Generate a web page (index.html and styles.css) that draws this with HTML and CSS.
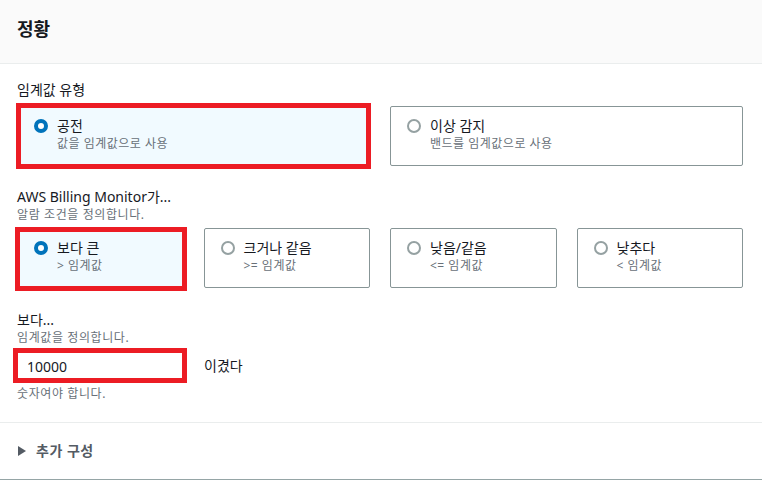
FILE: index.html
```html
<!DOCTYPE html>
<html lang="ko">
<head>
<meta charset="utf-8">
<link rel="stylesheet" href="styles.css">
</head>
<body>
<div class="panel">
  <div class="header"><h2 class="title">정황</h2></div>
  <div class="content">
    <div class="field field-type">
      <div class="label">임계값 유형</div>
      <div class="tiles two">
        <div class="tile selected mark mark-a">
          <span class="radio on"></span>
          <div class="tile-text">
            <div class="tile-title">공전</div>
            <div class="tile-sub">값을 임계값으로 사용</div>
          </div>
        </div>
        <div class="tile">
          <span class="radio"></span>
          <div class="tile-text">
            <div class="tile-title">이상 감지</div>
            <div class="tile-sub">밴드를 임계값으로 사용</div>
          </div>
        </div>
      </div>
    </div>

    <div class="field field-cond">
      <div class="label">AWS Billing Monitor가...</div>
      <div class="desc">알람 조건을 정의합니다.</div>
      <div class="tiles four">
        <div class="tile selected mark mark-b">
          <span class="radio on"></span>
          <div class="tile-text">
            <div class="tile-title">보다 큰</div>
            <div class="tile-sub">&gt; 임계값</div>
          </div>
        </div>
        <div class="tile">
          <span class="radio"></span>
          <div class="tile-text">
            <div class="tile-title">크거나 같음</div>
            <div class="tile-sub">&gt;= 임계값</div>
          </div>
        </div>
        <div class="tile">
          <span class="radio"></span>
          <div class="tile-text">
            <div class="tile-title">낮음/같음</div>
            <div class="tile-sub">&lt;= 임계값</div>
          </div>
        </div>
        <div class="tile">
          <span class="radio"></span>
          <div class="tile-text">
            <div class="tile-title">낮추다</div>
            <div class="tile-sub">&lt; 임계값</div>
          </div>
        </div>
      </div>
    </div>

    <div class="field field-value">
      <div class="label">보다...</div>
      <div class="desc">임계값을 정의합니다.</div>
      <div class="input-row">
        <div class="input-wrap mark mark-c"><input class="input" type="text" value="10000"></div>
        <span class="suffix">이겼다</span>
      </div>
      <div class="desc hint">숫자여야 합니다.</div>
    </div>
  </div>
  <div class="expand">
    <span class="caret"></span>
    <span class="expand-label">추가 구성</span>
  </div>
</div>
</body>
</html>
```

FILE: styles.css
```css
* { box-sizing: border-box; }
html, body { margin: 0; padding: 0; background: #ffffff; }
body {
  font-family: "Noto Sans", "Noto Sans CJK KR", sans-serif;
  color: #16191f;
  font-size: 14px;
  line-height: 20px;
}
.panel {
  width: 762px;
  height: 480px;
  border-bottom: 1px solid #95a5a6;
  overflow: hidden;
}
.header {
  height: 64px;
  background: #fafafa;
  border-bottom: 1px solid #eaeded;
  padding: 18px 17px 0;
}
.title {
  margin: 0;
  font-size: 18px;
  line-height: 22px;
  font-weight: 700;
}
.content {
  padding: 0 19px 0 17px;
  border-bottom: 1px solid #eaeded;
}
.field-type { padding-top: 16px; }
.field-cond { padding-top: 21px; }
.field-value { padding-top: 22px; padding-bottom: 20px; }
.label { font-size: 14px; line-height: 20px; color: #16191f; }
.desc { font-size: 12px; line-height: 16px; color: #687078; letter-spacing: 0.6px; }
.tiles { display: grid; column-gap: 20px; }
.tiles.two { grid-template-columns: 1fr 1fr; margin-top: 6px; }
.tiles.four { grid-template-columns: repeat(4, 1fr); margin-top: 5px; }
.tile {
  position: relative;
  display: flex;
  align-items: flex-start;
  height: 60px;
  padding: 9px 16px 0;
  border: 1px solid #879596;
  border-radius: 2px;
  background: #ffffff;
}
.tile.selected { background: #f1faff; border-color: #00a1c9; }
.radio {
  flex: none;
  width: 14px;
  height: 14px;
  margin-top: 3px;
  margin-right: 9px;
  border: 2px solid #95a1a2;
  border-radius: 50%;
  background: #fff;
}
.radio.on { border: 4px solid #0073bb; }
.tile-title { font-size: 14px; line-height: 20px; color: #16191f; }
.tile-sub { font-size: 12px; line-height: 16px; color: #687078; letter-spacing: 0.5px; }
.mark::after {
  content: "";
  position: absolute;
  border: 5px solid #ec1c24;
  pointer-events: none;
}
.mark-a::after { top: -4px; bottom: -4px; left: -2px; right: -2px; }
.mark-b::after { top: -2px; bottom: -4px; left: -3px; right: -4px; }
.mark-c::after { top: -2px; bottom: -1px; left: -4px; right: -4px; }
.input-row {
  display: flex;
  align-items: center;
  margin-top: 4px;
}
.input-wrap { position: relative; width: 166px; flex: none; }
.input {
  display: block;
  width: 100%;
  height: 32px;
  padding: 0 9px;
  border: 1px solid #aab7b8;
  border-radius: 2px;
  font-family: "Noto Sans", "Noto Sans CJK KR", sans-serif;
  font-size: 14px;
  color: #16191f;
  background: #fff;
  outline: none;
}
.suffix { margin-left: 21px; font-size: 14px; line-height: 20px; }
.hint { margin-top: 4px; }
.expand {
  display: flex;
  align-items: center;
  height: 56px;
  padding-left: 18px;
}
.caret {
  width: 0;
  height: 0;
  border-top: 5px solid transparent;
  border-bottom: 5px solid transparent;
  border-left: 8px solid #545b64;
  margin-right: 10px;
}
.expand-label { font-size: 14px; font-weight: 700; color: #545b64; letter-spacing: 0.5px; }
```
